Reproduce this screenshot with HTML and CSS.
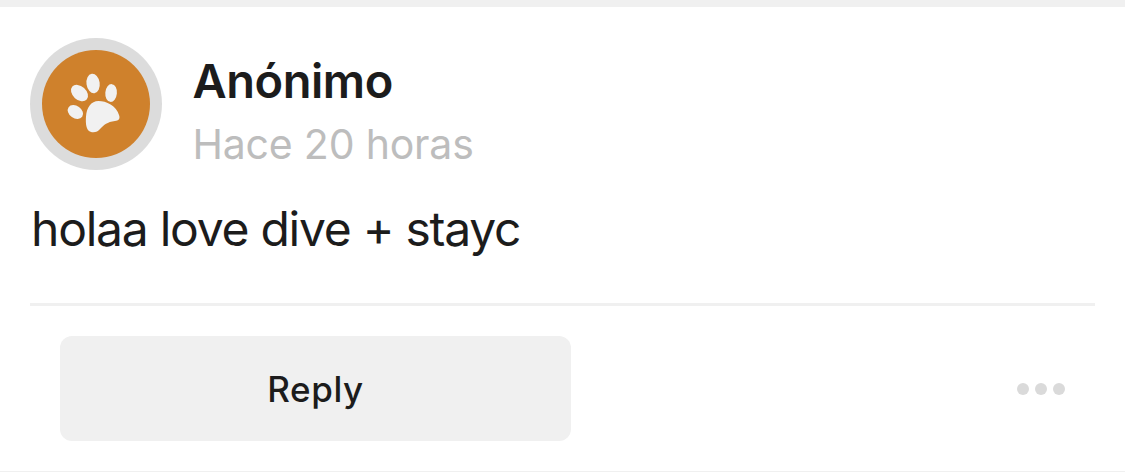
FILE: index.html
```html
<!DOCTYPE html>
<html lang="es">
<head>
<meta charset="utf-8">
<title>Anónimo</title>
<link rel="stylesheet" href="styles.css">
</head>
<body>
<article class="card">
  <header class="header">
    <svg class="avatar" viewBox="30 38 132 132" aria-hidden="true">
      <circle cx="96" cy="104" r="66" fill="#dcdcdc"/>
      <circle cx="96" cy="104" r="54" fill="#cf812c"/>
      <g fill="#f1f1f1">
        <ellipse cx="93.1" cy="83.5" rx="6.6" ry="9.8" transform="rotate(-8 93.1 83.5)"/>
        <ellipse cx="79.5" cy="93.1" rx="9.7" ry="6.8" transform="rotate(42 79.5 93.1)"/>
        <ellipse cx="111.1" cy="93" rx="5.8" ry="8.9" transform="rotate(5 111.1 93)"/>
        <ellipse cx="75.4" cy="112" rx="8.3" ry="6.2" transform="rotate(35 75.4 112)"/>
        <path d="M98.5 101C106 101 116.500 105.500 119.200 115.500C120.200 119 118.500 120.500 115 121C107 122 104 125 100.500 128.500C97.500 132 94 133.200 90.500 131.800C86 130 85.500 123.500 86 116.500C86.600 107.500 91 101 98.500 101Z"/>
      </g>
    </svg>
    <div class="meta">
      <div class="name">Anónimo</div>
      <div class="time">Hace 20 horas</div>
    </div>
  </header>
  <p class="message">holaa love dive + stayc</p>
  <footer class="actions">
    <button class="reply">Reply</button>
    <div class="more"><i class="dot"></i><i class="dot"></i><i class="dot"></i></div>
  </footer>
</article>
</body>
</html>
```
FILE: styles.css
```css
* { box-sizing: border-box; }
body { margin: 0; background: #fff; font-family: Inter, "Liberation Sans", sans-serif; color: #1c1c1c; }
.card { height: 472px; padding: 31px 30px 0; border-top: 7px solid #f0f0f0; border-bottom: 1px solid #f0f0f0; }
.header { display: flex; height: 132px; gap: 30.5px; }
.avatar { width: 132px; height: 132px; flex: none; }
.meta { padding-top: 13px; white-space: nowrap; }
.name { font-size: 47px; line-height: 60px; font-weight: 600; letter-spacing: -0.45px; }
.time { margin-top: 3px; font-size: 41px; line-height: 60px; letter-spacing: -0.2px; color: #bdbdbd; }
.message { margin: 0; padding: 29px 0 44px 1px; border-bottom: 3px solid #f0f0f0; font-size: 48px; line-height: 60px; letter-spacing: -1.25px; white-space: nowrap; height: 136px; }
.actions { display: flex; justify-content: space-between; align-items: center; padding: 30px 30px 0; }
.reply { width: 511px; height: 105px; padding: 1px 0 0; border: 0; border-radius: 12px; background: #f0f0f0; color: #1c1c1c; font: 500 35px/104px Inter, "Liberation Sans", sans-serif; letter-spacing: 0.6px; }
.more { display: flex; gap: 6px; }
.dot { width: 12px; height: 12px; border-radius: 50%; background: #dadada; }
```
